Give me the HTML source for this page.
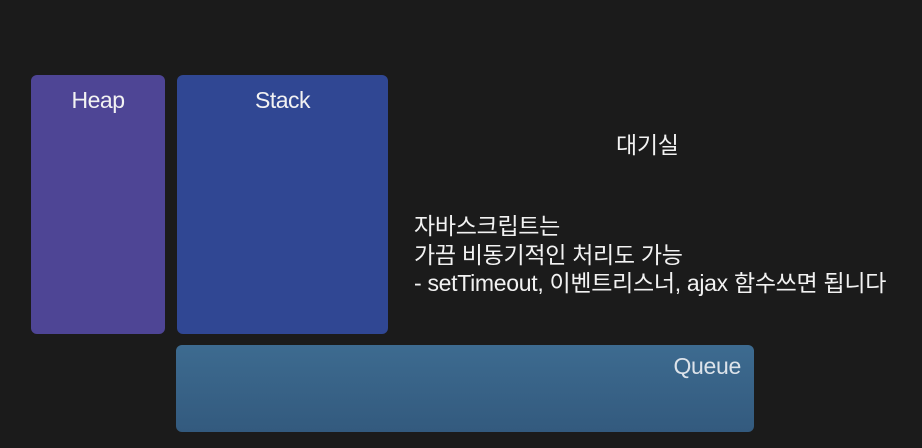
<!DOCTYPE html>
<html><head><meta charset="utf-8"><style>
html,body{margin:0;padding:0;}
body{width:922px;height:448px;background:#1b1b1b;position:relative;overflow:hidden;font-family:"Liberation Sans","Noto Sans CJK KR",sans-serif;color:#f2f2f2;}
.b{position:absolute;border-radius:6px;}
.lbl{position:absolute;font-size:23px;text-align:center;width:100%;top:12px;letter-spacing:-0.5px;}
.t{position:absolute;font-size:23px;white-space:nowrap;letter-spacing:-0.3px;}
</style></head><body>
<div class="b" style="left:31px;top:75px;width:134px;height:259px;background:#4e4595;"><div class="lbl">Heap</div></div>
<div class="b" style="left:177px;top:75px;width:211px;height:259px;background:#304793;"><div class="lbl">Stack</div></div>
<div class="b" style="left:176px;top:345px;width:578px;height:87px;background:linear-gradient(#3d6b90,#335a7e);"><div class="t" style="right:13px;top:8px;color:#dde3ea;">Queue</div></div>
<div class="t" style="left:616px;top:126px;">대기실</div>
<div class="t" style="left:414px;top:212px;line-height:28.5px;">자바스크립트는<br>가끔 비동기적인 처리도 가능<br>- setTimeout, 이벤트리스너, ajax 함수쓰면 됩니다</div>
</body></html>
